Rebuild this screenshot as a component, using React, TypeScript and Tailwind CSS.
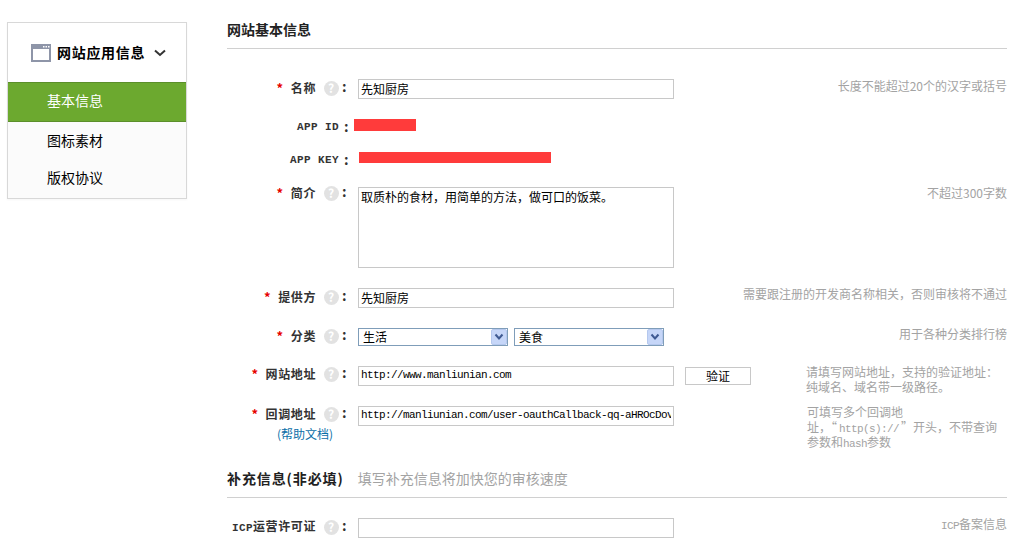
import type { ReactNode } from "react";

const inputBox = "h-5 w-[316px] border border-[#c8c8c8] bg-white px-[2px] pb-[2px] text-black outline-none";
const latin = "font-['Liberation_Mono',monospace] text-[11px] leading-none tracking-[-0.6px]";
const latinBold = "font-['Liberation_Mono',monospace] text-[11px] leading-none font-bold tracking-[0.4px] text-[#333]";

const Help = () => (
  <span className="flex size-[15px] items-center justify-center rounded-full bg-[#e2e2e2] text-[12px] font-bold leading-none text-white">
    ?
  </span>
);

const Colon = () => <span className="w-[7px] pb-[2px] pl-[1px] text-[14px] font-bold leading-none text-[#333]">:</span>;

const Label = ({ children, required = true, className }: { children: ReactNode; required?: boolean; className?: string }) => (
  <div className={`flex h-4 w-[121px] items-center justify-end font-bold tracking-[0.6px] text-[#333] ${className ?? ""}`}>
    {required && <span className="mr-[7px] text-[13px] text-[#e60000]">*</span>}
    <span>{children}</span>
    <span className="mt-[2px] ml-2">
      <Help />
    </span>
    <span className="ml-[2px] flex">
      <Colon />
    </span>
  </div>
);

const Hint = ({ children, className = "-mt-[2px]" }: { children: ReactNode; className?: string }) => (
  <div className={`flex-1 text-right text-[#a3a3a3] ${className}`}>{children}</div>
);

const Row = ({ className, children }: { className?: string; children: ReactNode }) => (
  <div className={`flex items-start ${className ?? ""}`}>{children}</div>
);

const Select = ({ value }: { value: string }) => (
  <div className="relative h-[18px] w-[150px] border border-[#7f9db9] bg-white">
    <select className="h-full w-full appearance-none pb-[2px] pl-1 text-black outline-none" defaultValue={value}>
      <option>{value}</option>
    </select>
    <span className="pointer-events-none absolute top-0 right-0 flex h-4 w-4 items-center justify-center rounded-[2px] border border-[#b5c8ee] bg-[#c6d6f8]">
      <svg viewBox="0 0 10 8" className="h-2 w-[10px]" fill="none" stroke="#3f5a92" strokeWidth="2">
        <path d="M1.5 1.5 5 5.5l3.5-4" />
      </svg>
    </span>
  </div>
);

const Sidebar = () => (
  <aside className="h-[177px] w-[180px] border border-[#d8d8d8] bg-[#fbfbfb] text-[14px] shadow-[0_1px_2px_rgba(0,0,0,0.04)]">
    <div className="flex h-[59px] items-center bg-white pl-[23px]">
      <svg viewBox="0 0 20 18" className="h-[18px] w-5">
        <rect width="20" height="18" fill="#8e95a8" />
        <rect x="2" y="5" width="16" height="11" fill="#fff" />
        <path d="M12 2h1.500v1.500H12zM14.500 2H16v1.500h-1.500zM17 2h1.500v1.500H17z" fill="#fff" />
      </svg>
      <span className="ml-[6px] font-bold tracking-[0.7px] text-black">网站应用信息</span>
      <svg viewBox="0 0 12 8" className="ml-[9px] h-2 w-3" fill="none" stroke="#333" strokeWidth="2">
        <path d="M1 1.500 6 6l5-4.500" />
      </svg>
    </div>
    <div className="flex h-10 items-center border border-x-0 border-[#5b8f2a] bg-[#6ca92f] pb-1 pl-[39px] text-white">基本信息</div>
    <div className="flex h-[38px] items-center pb-[2px] pl-[39px] text-black">图标素材</div>
    <div className="flex h-[38px] items-center pb-1 pl-[39px] text-black">版权协议</div>
  </aside>
);

export default function App() {
  return (
    <div className="flex h-[540px] w-[1033px] items-start overflow-hidden bg-white pt-[22px] pl-[7px] font-['Noto_Sans_CJK_SC',sans-serif] text-[12px] leading-[15px]">
      <Sidebar />
      <main className="ml-10 w-[780px]">
        <h2 className="h-[27px] border-b border-[#d0d0d0] text-[14px] leading-[14px] font-bold text-[#222]">
          网站基本信息
        </h2>
        <Row className="mt-[30px]">
          <Label>名称</Label>
          <input className={`ml-[10px] ${inputBox}`} defaultValue="先知厨房" />
          <Hint className="-mt-[1px]">长度不能超过20个的汉字或括号</Hint>
        </Row>
        <Row className="mt-5 h-[13px] items-center">
          <span className={`ml-[70px] w-[46px] pt-[3px] ${latinBold}`}>APP ID</span>
          <Colon />
          <span className="ml-1 h-[12px] w-[62px] bg-[#ff3b3b]" />
        </Row>
        <Row className="mt-5 h-[13px] items-center">
          <span className={`ml-[63px] w-[53px] pt-[3px] ${latinBold}`}>APP KEY</span>
          <Colon />
          <span className="ml-[9px] h-[11px] w-[192px] bg-[#ff3b3b]" />
        </Row>
        <Row className="mt-[22px]">
          <Label className="-mt-[3px]">简介</Label>
          <textarea
            className="ml-[10px] h-[81px] w-[316px] resize-none border border-[#c8c8c8] px-[2px] pt-[1px] text-black outline-none"
            defaultValue="取质朴的食材，用简单的方法，做可口的饭菜。"
          />
          <Hint>不超过300字数</Hint>
        </Row>
        <Row className="mt-5">
          <Label>提供方</Label>
          <input className={`ml-[10px] ${inputBox}`} defaultValue="先知厨房" />
          <Hint>需要跟注册的开发商名称相关，否则审核将不通过</Hint>
        </Row>
        <Row className="mt-5">
          <Label className="-mt-[1px]">分类</Label>
          <div className="ml-[10px] flex w-[316px] gap-[6px]">
            <Select value="生活" />
            <Select value="美食" />
          </div>
          <Hint>用于各种分类排行榜</Hint>
        </Row>
        <Row className="mt-5 h-5">
          <Label className="-mt-[1px]">网站地址</Label>
          <input className={`ml-[10px] ${inputBox} ${latin}`} defaultValue="http://www.manliunian.com" />
          <button className="mt-[1px] ml-[11px] h-[18px] w-[66px] border border-[#c8c8c8] bg-white pb-[2px] text-black">验证</button>
          <div className="-mt-[2px] ml-[55px] w-[200px] text-[#a3a3a3]">
            <div className="h-[15px]">请填写网站地址，支持的验证地址：</div>
            <div className="h-[15px]">纯域名、域名带一级路径。</div>
          </div>
        </Row>
        <Row className="mt-5 h-[60px]">
          <div>
            <Label className="-mt-[1px]">回调地址</Label>
            <div className="mt-[5px] pl-[50px] text-[12px] text-[#0b6fa8]">(帮助文档)</div>
          </div>
          <input
            className={`ml-[10px] ${inputBox} ${latin}`}
            defaultValue="http://manliunian.com/user-oauthCallback-qq-aHROcDovL2"
          />
          <div className="-mt-[2px] ml-[133px] w-[200px] text-[#a3a3a3]">
            <div className="h-[15px]">可填写多个回调地</div>
            <div className="h-[15px]">
              址，“<span className={`mx-[2px] ${latin}`}>http(s)://</span>”开头，不带查询
            </div>
            <div className="h-[15px]">
              参数和<span className={latin}>hash</span>参数
            </div>
          </div>
        </Row>
        <h2 className="mt-[3px] flex h-[29px] items-start border-b border-[#d0d0d0] pt-[1px] text-[14px] leading-[16px]">
          <span className="font-bold tracking-[0.9px] text-[#222]">补充信息(非必填)</span>
          <span className="ml-[14px] text-[#a3a3a3]">填写补充信息将加快您的审核速度</span>
        </h2>
        <Row className="mt-5">
          <Label required={false}>
            <span className={latinBold}>ICP</span>运营许可证
          </Label>
          <input className={`ml-[10px] ${inputBox}`} />
          <Hint>
            <span className={latin}>ICP</span>备案信息
          </Hint>
        </Row>
      </main>
    </div>
  );
}
